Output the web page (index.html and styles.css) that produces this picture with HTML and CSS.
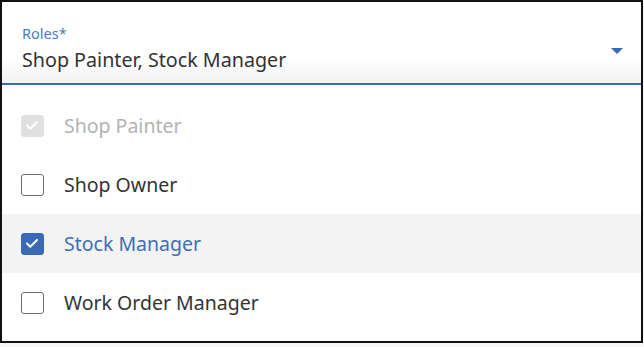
FILE: index.html
```html
<!DOCTYPE html>
<html lang="en">
<head>
    <meta charset="UTF-8">
    <meta name="viewport" content="width=device-width, initial-scale=1.0">
    <title>Roles</title>
    <link rel="stylesheet" href="styles.css">
</head>
<body>

<div class="select-box">
    <!-- selected value -->
    <div class="select-field">
        <div class="field-text">
            <div class="field-label">Roles*</div>
            <div class="field-value">Shop Painter, Stock Manager</div>
        </div>
        <span class="caret"></span>
    </div>

    <!-- option list -->
    <ul class="option-list">
        <li class="option disabled">
            <span class="check checked"><svg viewBox="0 0 22 22"><path d="M6 11.5l3.3 3.3L16 8"/></svg></span>
            <span class="option-text">Shop Painter</span>
        </li>
        <li class="option">
            <span class="check"></span>
            <span class="option-text">Shop Owner</span>
        </li>
        <li class="option selected">
            <span class="check checked"><svg viewBox="0 0 22 22"><path d="M6 11.5l3.3 3.3L16 8"/></svg></span>
            <span class="option-text">Stock Manager</span>
        </li>
        <li class="option">
            <span class="check"></span>
            <span class="option-text">Work Order Manager</span>
        </li>
    </ul>
</div>

</body>
</html>
```
FILE: styles.css
```css
body {
    margin: 0;
    background-color: #f7f7f7;
    font-family: "Noto Sans", "Open Sans", Arial, sans-serif;
}
.select-box {
    width: 643px;
    height: 343px;
    box-sizing: border-box;
    border: 2px solid #111;
    background-color: #fff;
}
.select-field {
    display: flex;
    align-items: flex-start;
    height: 81px;
    padding: 0 18px 0 20px;
    border-bottom: 2px solid #3a6ab4;
    background: linear-gradient(to bottom, #fff 70%, #f2f2f2 100%);
}
.field-text {
    flex: 1;
    padding-top: 22px;
}
.field-label {
    font-size: 14.5px;
    line-height: 18px;
    margin-bottom: 4px;
    color: #4a7cc0;
}
.field-value {
    font-size: 19.7px;
    line-height: 28px;
    color: #333;
}
.caret {
    width: 0;
    height: 0;
    margin-top: 46px;
    border-left: 6px solid transparent;
    border-right: 6px solid transparent;
    border-top: 6px solid #3a6ab4;
}
.option-list {
    list-style: none;
    margin: 0;
    padding: 11px 0 0 0;
}
.option {
    display: flex;
    align-items: center;
    height: 59px;
    padding-left: 19px;
    font-size: 19.5px;
    color: #333;
}
.option.selected {
    background-color: #f3f3f3;
    color: #3d6fb6;
}
.option.disabled {
    color: #b3b3b3;
}
.check {
    width: 23px;
    height: 22px;
    box-sizing: border-box;
    border: 1.5px solid #6b6b6b;
    border-radius: 3px;
    margin-right: 20px;
    background-color: #fff;
}
.check svg {
    display: block;
    width: 22px;
    height: 22px;
    margin: -1.5px;
}
.check path {
    fill: none;
    stroke: #fff;
    stroke-width: 2;
    stroke-linecap: round;
    stroke-linejoin: round;
}
.check.checked {
    border-color: #3a6ab4;
    background-color: #3a6ab4;
}
.disabled .check.checked {
    border-color: #e0e0e0;
    background-color: #e0e0e0;
}
```
